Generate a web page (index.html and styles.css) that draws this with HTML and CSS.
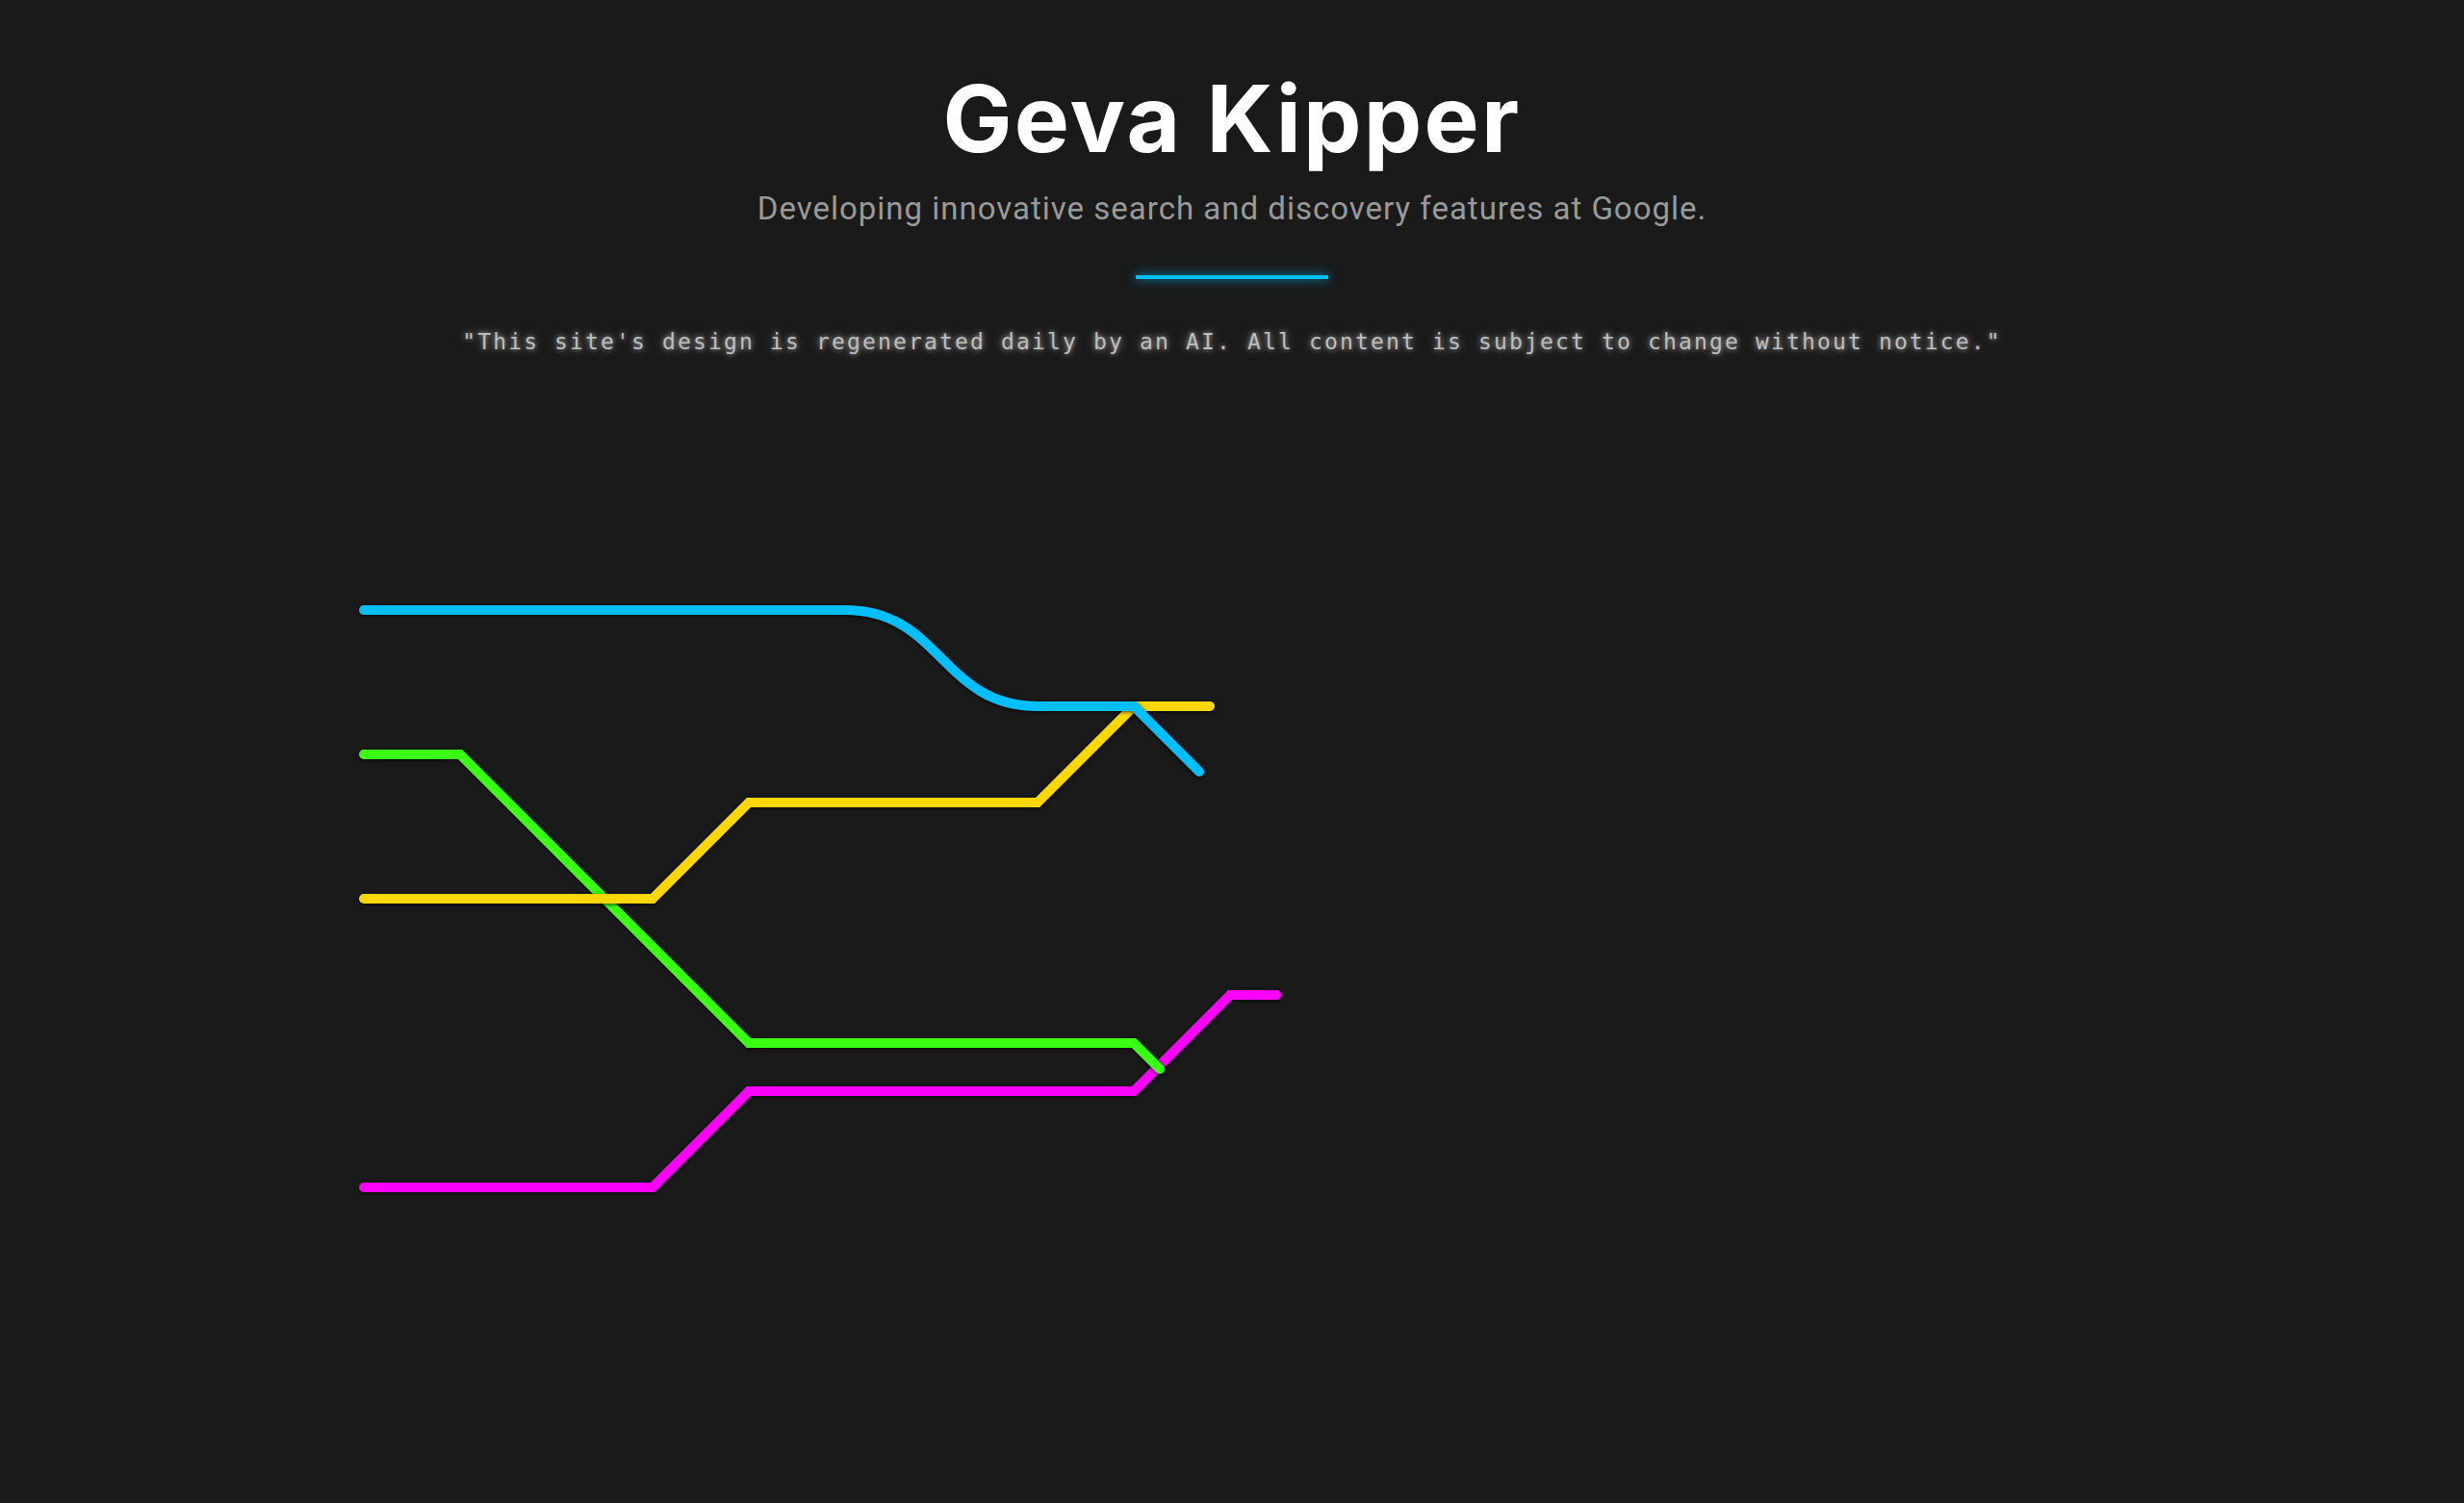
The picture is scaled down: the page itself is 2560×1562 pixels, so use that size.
FILE: index.html
```html
<!DOCTYPE html>
<html lang="en">
<head>
<meta charset="utf-8">
<title>Geva Kipper</title>
<link rel="stylesheet" href="styles.css">
</head>
<body>
<header class="hero">
  <h1 class="hero-title">Geva Kipper</h1>
  <p class="hero-subtitle">Developing innovative search and discovery features at Google.</p>
  <div class="hero-divider"></div>
  <p class="hero-quote">"This site's design is regenerated daily by an AI. All content is subject to change without notice."</p>
</header>
<main class="map">
  <svg class="map-svg" width="2560" height="1000" viewBox="0 400 2560 1000" xmlns="http://www.w3.org/2000/svg">
    <path class="line line-magenta" d="M378,1234 H678 L778,1134 H1178 L1278,1034 H1326"/>
    <path class="line line-green" d="M378,784 H478 L778,1084 H1178 L1205,1111"/>
    <path class="line line-yellow" d="M378,934 H678 L778,834 H1078 L1178,734 H1257"/>
    <path class="line line-blue" d="M378,634 H878 C978,634 978,734 1078,734 H1178 L1246,802"/>
  </svg>
</main>
</body>
</html>
```

FILE: styles.css
```css
html, body {
  margin: 0;
  padding: 0;
}

body {
  background: #1a1a1a;
  color: #ffffff;
  font-family: "Roboto", "Noto Sans", sans-serif;
  overflow: hidden;
}

.hero {
  display: flex;
  flex-direction: column;
  align-items: center;
  padding-top: 65px;
  text-align: center;
}

.hero-title {
  margin: 0;
  font-family: "Inter", "Noto Sans", sans-serif;
  font-weight: 700;
  font-size: 96px;
  line-height: 116px;
  color: #ffffff;
  letter-spacing: 2.3px;
}

.hero-subtitle {
  margin: 16px 0 0;
  font-family: "Roboto", sans-serif;
  font-weight: 400;
  font-size: 33px;
  line-height: 40px;
  letter-spacing: 1px;
  color: #999999;
}

.hero-divider {
  margin-top: 49px;
  width: 200px;
  height: 4px;
  background: #00bfff;
  box-shadow: 0 0 10px rgba(0, 191, 255, 0.7), 0 0 20px rgba(0, 191, 255, 0.3);
}

.hero-quote {
  margin: 50px 0 0;
  font-family: "DejaVu Sans Mono", "Liberation Mono", monospace;
  font-size: 23px;
  line-height: 30px;
  letter-spacing: 2.15px;
  color: #bdbdbd;
  text-shadow: 0 0 5px rgba(255, 255, 255, 0.5), 0 0 12px rgba(255, 255, 255, 0.35);
}

.map {
  margin-top: 30px;
}

.map-svg {
  display: block;
}

.line {
  fill: none;
  stroke-width: 10;
  stroke-linecap: round;
  stroke-linejoin: miter;
  filter: drop-shadow(0 1px 2px rgba(0, 0, 0, 0.7));
}

.line-blue { stroke: #00bfff; }
.line-yellow { stroke: #ffd700; }
.line-green { stroke: #39ff14; }
.line-magenta { stroke: #ff00ff; }
```
